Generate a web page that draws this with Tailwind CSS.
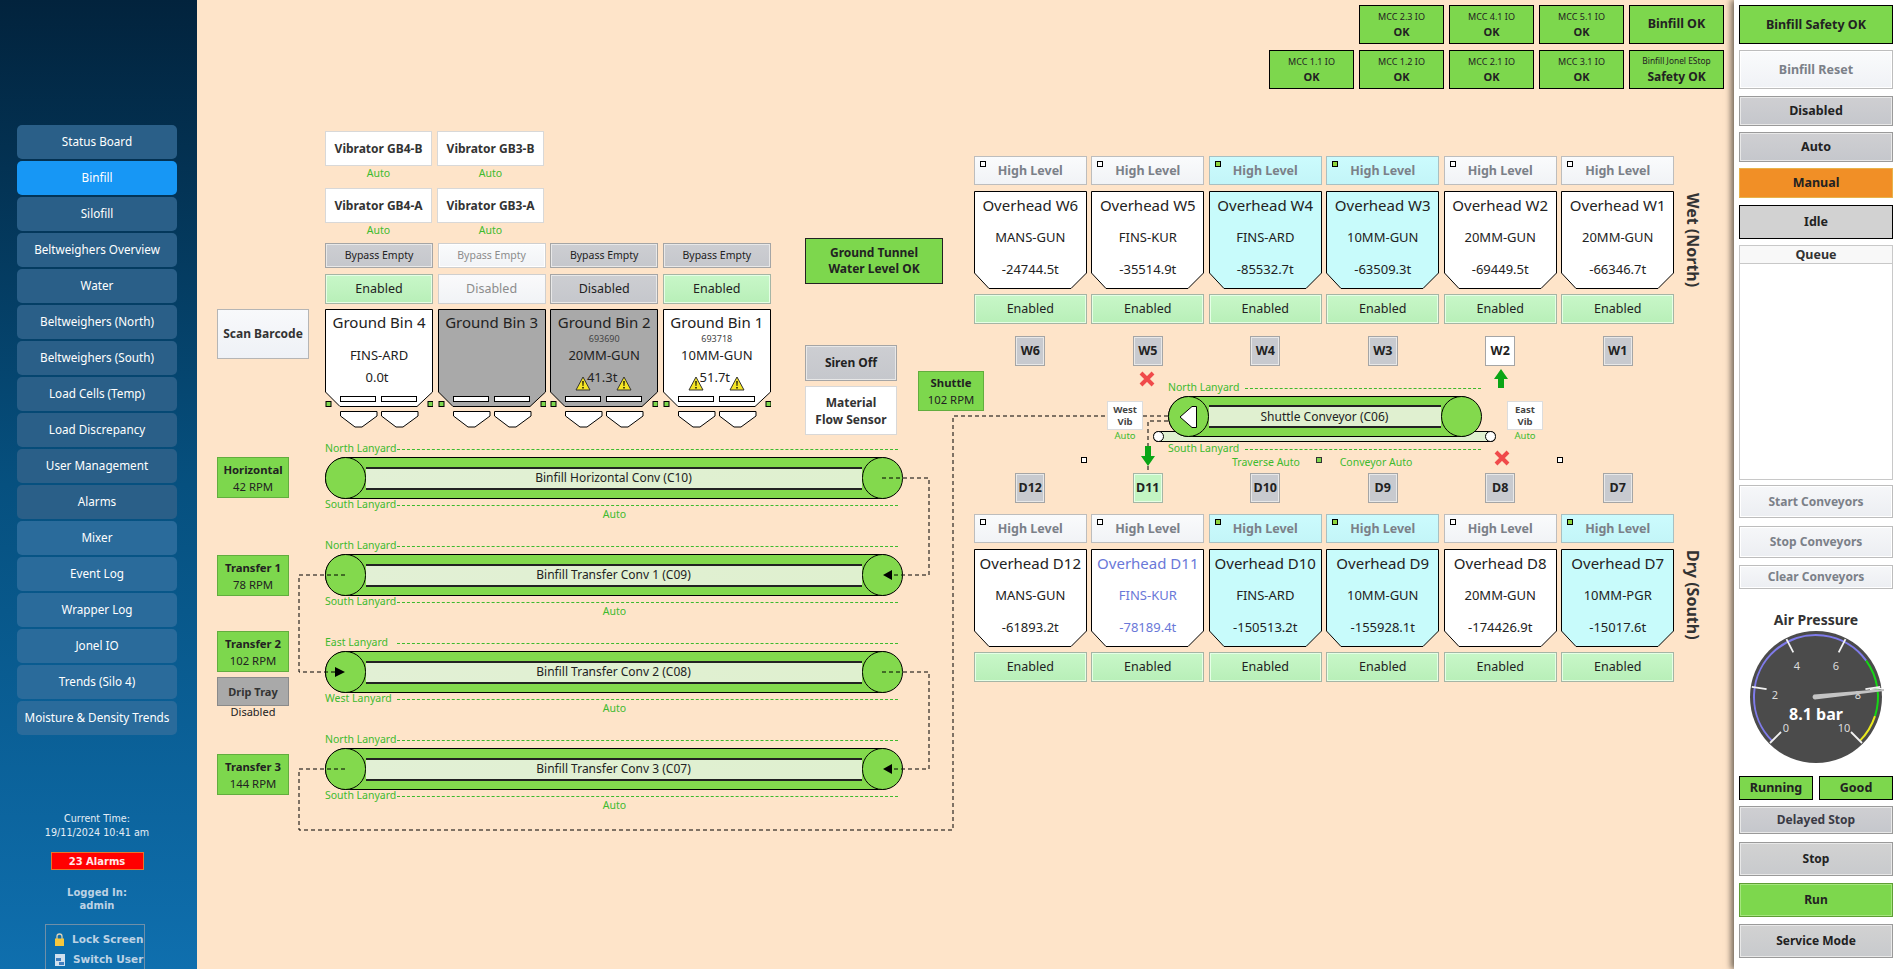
<!DOCTYPE html>
<html lang="en">
<head>
<meta charset="utf-8">
<title>Binfill</title>
<script src="https://cdn.jsdelivr.net/npm/@tailwindcss/browser@4"></script>
</head>
<body class="m-0">
<div class="flex w-[1903px] h-[969px] overflow-hidden font-['Noto_Sans',sans-serif] text-[#222] bg-[#fee4c9]">

<!-- SIDEBAR -->
<aside class="w-[197px] shrink-0 h-full pl-[17px] pr-[20px] pt-[125px] bg-gradient-to-b from-[#02233d] via-[#06507f] to-[#0f6fae] text-white flex flex-col">
  <nav class="flex flex-col gap-[2px] text-[11.7px] whitespace-nowrap">
    <a class="h-[34px] rounded-[5px] bg-[#2a5f88] flex items-center justify-center">Status Board</a>
    <a class="h-[34px] rounded-[5px] bg-[#1797f5] flex items-center justify-center">Binfill</a>
    <a class="h-[34px] rounded-[5px] bg-[#2a5f88] flex items-center justify-center">Silofill</a>
    <a class="h-[34px] rounded-[5px] bg-[#2a5f88] flex items-center justify-center">Beltweighers Overview</a>
    <a class="h-[34px] rounded-[5px] bg-[#2a5f88] flex items-center justify-center">Water</a>
    <a class="h-[34px] rounded-[5px] bg-[#2a5f88] flex items-center justify-center">Beltweighers (North)</a>
    <a class="h-[34px] rounded-[5px] bg-[#2a5f88] flex items-center justify-center">Beltweighers (South)</a>
    <a class="h-[34px] rounded-[5px] bg-[#2a5f88] flex items-center justify-center">Load Cells (Temp)</a>
    <a class="h-[34px] rounded-[5px] bg-[#2a5f88] flex items-center justify-center">Load Discrepancy</a>
    <a class="h-[34px] rounded-[5px] bg-[#2a5f88] flex items-center justify-center">User Management</a>
    <a class="h-[34px] rounded-[5px] bg-[#2a5f88] flex items-center justify-center">Alarms</a>
    <a class="h-[34px] rounded-[5px] bg-[#2a6b9b] flex items-center justify-center">Mixer</a>
    <a class="h-[34px] rounded-[5px] bg-[#2a6b9b] flex items-center justify-center">Event Log</a>
    <a class="h-[34px] rounded-[5px] bg-[#2a6b9b] flex items-center justify-center">Wrapper Log</a>
    <a class="h-[34px] rounded-[5px] bg-[#2a6b9b] flex items-center justify-center">Jonel IO</a>
    <a class="h-[34px] rounded-[5px] bg-[#2a6b9b] flex items-center justify-center">Trends (Silo 4)</a>
    <a class="h-[34px] rounded-[5px] bg-[#2a6b9b] flex items-center justify-center">Moisture &amp; Density Trends</a>
  </nav>
  <div class="mt-[77px] text-center text-[9.6px] leading-[14px] font-['DejaVu_Sans',sans-serif] text-[#e4edf5]">Current Time:<br>19/11/2024 10:41 am</div>
  <div class="mt-[12px] mx-auto w-[93px] h-[22px] bg-[#ff0000] border border-[#e8742c] flex items-center justify-center text-[10px] pt-[1px] font-bold font-['DejaVu_Sans',sans-serif] text-[#ffe8e8]">23 Alarms</div>
  <div class="mt-[16px] text-center text-[10px] leading-[13px] font-bold font-['DejaVu_Sans',sans-serif] text-[#bcd2e4]">Logged In:<br>admin</div>
  <div class="mt-[12px] ml-[28px] w-[100px] h-[60px] shrink-0 border border-[#6f8fa8] pl-[9px] pt-[7px] flex flex-col gap-[5px] text-[10.5px] font-bold font-['DejaVu_Sans',sans-serif] text-[#bcd2e4]">
    <div class="flex items-center gap-[8px] h-[15px]">
      <svg width="9" height="13" viewBox="0 0 9 13"><path d="M2 6V3.5a2.5 2.5 0 0 1 5 0V6" fill="none" stroke="#d8d2b8" stroke-width="1.3"/><rect x="0" y="5.5" width="9" height="7.5" fill="#f6c73c"/></svg>
      <span>Lock Screen</span>
    </div>
    <div class="flex items-center gap-[8px] h-[15px]">
      <svg width="10" height="12" viewBox="0 0 10 12"><rect width="10" height="12" fill="#cfe0ee"/><path d="M1 4h5v3H1zM4 8h5v3H4z" fill="#3f7fc0"/></svg>
      <span>Switch User</span>
    </div>
  </div>
</aside>

<!-- CANVAS -->
<main class="relative w-[1537px] shrink-0 h-full">

  <!-- top status boxes -->
  <div class="absolute left-[1072px] top-[5px] grid grid-cols-[85px_85px_85px_85px_95px] grid-rows-[39px_39px] gap-x-[5px] gap-y-[6px] text-center">
    <div></div>
    <div class="bg-[#7dd74d] border border-black flex flex-col items-center justify-center"><span class="text-[9px] leading-[14px]">MCC 2.3 IO</span><b class="text-[11px] leading-[15px]">OK</b></div>
    <div class="bg-[#7dd74d] border border-black flex flex-col items-center justify-center"><span class="text-[9px] leading-[14px]">MCC 4.1 IO</span><b class="text-[11px] leading-[15px]">OK</b></div>
    <div class="bg-[#7dd74d] border border-black flex flex-col items-center justify-center"><span class="text-[9px] leading-[14px]">MCC 5.1 IO</span><b class="text-[11px] leading-[15px]">OK</b></div>
    <div class="bg-[#7dd74d] border border-black flex items-center justify-center"><b class="text-[12.5px]">Binfill OK</b></div>
    <div class="bg-[#7dd74d] border border-black flex flex-col items-center justify-center"><span class="text-[9px] leading-[14px]">MCC 1.1 IO</span><b class="text-[11px] leading-[15px]">OK</b></div>
    <div class="bg-[#7dd74d] border border-black flex flex-col items-center justify-center"><span class="text-[9px] leading-[14px]">MCC 1.2 IO</span><b class="text-[11px] leading-[15px]">OK</b></div>
    <div class="bg-[#7dd74d] border border-black flex flex-col items-center justify-center"><span class="text-[9px] leading-[14px]">MCC 2.1 IO</span><b class="text-[11px] leading-[15px]">OK</b></div>
    <div class="bg-[#7dd74d] border border-black flex flex-col items-center justify-center"><span class="text-[9px] leading-[14px]">MCC 3.1 IO</span><b class="text-[11px] leading-[15px]">OK</b></div>
    <div class="bg-[#7dd74d] border border-black flex flex-col items-center justify-center"><span class="text-[8.4px] leading-[14px]">Binfill Jonel EStop</span><b class="text-[12px] leading-[17px]">Safety OK</b></div>
  </div>

  <!-- scan barcode -->
  <button class="absolute left-[20px] top-[309px] w-[92px] h-[50px] bg-gradient-to-b from-[#f8f9fb] to-[#eef1f6] border border-[#b5b5b5] text-[12px] font-bold text-[#333]">Scan Barcode</button>

  <!-- conveyor speed boxes -->
  <div class="absolute left-[20px] top-[457px] w-[72px] h-[41px] bg-[#7dd74d] border border-[#62ad3e] flex flex-col items-center justify-center text-[11.3px] leading-[17px]"><b>Horizontal</b><span>42 RPM</span></div>
  <div class="absolute left-[20px] top-[555px] w-[72px] h-[41px] bg-[#7dd74d] border border-[#62ad3e] flex flex-col items-center justify-center text-[11.3px] leading-[17px]"><b>Transfer 1</b><span>78 RPM</span></div>
  <div class="absolute left-[20px] top-[631px] w-[72px] flex flex-col items-center text-[11.3px] leading-[17px]">
    <div class="w-full h-[41px] bg-[#7dd74d] border border-[#62ad3e] flex flex-col items-center justify-center"><b>Transfer 2</b><span>102 RPM</span></div>
    <div class="w-full h-[29px] mt-[5px] bg-[#a9a9a9] border border-[#8a8a8a] flex items-center justify-center font-bold text-[#333] text-[11px]">Drip Tray</div>
    <div class="text-[11px] leading-[14px] mt-[-1px]">Disabled</div>
  </div>
  <div class="absolute left-[20px] top-[754px] w-[72px] h-[41px] bg-[#7dd74d] border border-[#62ad3e] flex flex-col items-center justify-center text-[11.3px] leading-[17px]"><b>Transfer 3</b><span>144 RPM</span></div>

  <!-- vibrators -->
  <div class="absolute left-[128px] top-[131px] grid grid-cols-[107px_107px] gap-x-[5px] text-center">
    <div class="h-[57px]"><div class="h-[35px] bg-white border border-[#d8d8d8] flex items-center justify-center text-[12px] font-bold text-[#333]">Vibrator GB4-B</div><div class="text-[10.5px] leading-[14px] text-[#3dba2e]">Auto</div></div>
    <div class="h-[57px]"><div class="h-[35px] bg-white border border-[#d8d8d8] flex items-center justify-center text-[12px] font-bold text-[#333]">Vibrator GB3-B</div><div class="text-[10.5px] leading-[14px] text-[#3dba2e]">Auto</div></div>
    <div class="h-[57px]"><div class="h-[35px] bg-white border border-[#d8d8d8] flex items-center justify-center text-[12px] font-bold text-[#333]">Vibrator GB4-A</div><div class="text-[10.5px] leading-[14px] text-[#3dba2e]">Auto</div></div>
    <div class="h-[57px]"><div class="h-[35px] bg-white border border-[#d8d8d8] flex items-center justify-center text-[12px] font-bold text-[#333]">Vibrator GB3-A</div><div class="text-[10.5px] leading-[14px] text-[#3dba2e]">Auto</div></div>
  </div>

  <!-- ground bins -->
  <div class="absolute left-[128px] top-[243px] flex gap-[4.6px]">
    <!-- bin 4 -->
    <div class="w-[108px] flex flex-col">
      <button class="h-[25px] bg-gradient-to-b from-[#cdced2] to-[#c5c7cc] border border-[#a5a5a5] shadow-[inset_0_0_0_1px_#e8e8e8] text-[10.5px]">Bypass Empty</button>
      <div class="h-[30px] mt-[6px] bg-gradient-to-b from-[#c8f7c8] to-[#b8efb8] border border-[#a5b5a5] shadow-[inset_0_0_0_1px_#e5ffe5] flex items-center justify-center text-[12.5px]">Enabled</div>
      <div class="relative h-[119px] mt-[5px]">
        <svg class="absolute inset-0" width="108" height="119" viewBox="0 0 108 119"><path d="M.5.5H107.5V83L92 97.5H15L.5 83Z" fill="#fff" stroke="#000"/><rect x="15.5" y="87.5" width="35" height="5" fill="#fff" stroke="#000"/><rect x="56.5" y="87.5" width="35" height="5" fill="#fff" stroke="#000"/><path d="M15.5 102.5H52V107L37 118H30L15.5 107Z" fill="#fff" stroke="#000"/><path d="M56.5 102.5H93V107L78 118H71L56.5 107Z" fill="#fff" stroke="#000"/><rect x="1" y="92.500" width="5" height="5" fill="#7dd74d" stroke="#000"/><rect x="103" y="92.500" width="5" height="5" fill="#7dd74d" stroke="#000"/></svg>
        <div class="relative flex flex-col items-center pt-[4px] text-center">
          <div class="h-[19px] leading-[19px] text-[15px]">Ground Bin 4</div><div class="h-[12px] mt-[1px] leading-[12px] text-[9px] text-[#555]"></div>
          <div class="h-[18px] mt-[1px] leading-[18px] text-[13px]">FINS-ARD</div><div class="h-[18px] mt-[4px] leading-[18px] text-[13px] pr-[4px]">0.0t</div>
        </div>
      </div>
    </div>
    <!-- bin 3 -->
    <div class="w-[108px] flex flex-col">
      <button class="h-[25px] bg-gradient-to-b from-[#fafbfc] to-[#f1f3f6] border border-[#cfcfcf] shadow-[inset_0_0_0_1px_#fff] text-[10.5px] text-[#8c8c8c]">Bypass Empty</button>
      <div class="h-[30px] mt-[6px] bg-gradient-to-b from-[#fafafb] to-[#f1f3f6] border border-[#cfcfcf] flex items-center justify-center text-[12.5px] text-[#8c8c8c]">Disabled</div>
      <div class="relative h-[119px] mt-[5px]">
        <svg class="absolute inset-0" width="108" height="119" viewBox="0 0 108 119"><path d="M.5.5H107.5V83L92 97.5H15L.5 83Z" fill="#a9a9a9" stroke="#000"/><rect x="15.5" y="87.5" width="35" height="5" fill="#fff" stroke="#000"/><rect x="56.5" y="87.5" width="35" height="5" fill="#fff" stroke="#000"/><path d="M15.5 102.5H52V107L37 118H30L15.5 107Z" fill="#fff" stroke="#000"/><path d="M56.5 102.5H93V107L78 118H71L56.5 107Z" fill="#fff" stroke="#000"/><rect x="1" y="92.500" width="5" height="5" fill="#7dd74d" stroke="#000"/><rect x="103" y="92.500" width="5" height="5" fill="#7dd74d" stroke="#000"/></svg>
        <div class="relative flex flex-col items-center pt-[4px] text-center">
          <div class="h-[19px] leading-[19px] text-[15px]">Ground Bin 3</div>
        </div>
      </div>
    </div>
    <!-- bin 2 -->
    <div class="w-[108px] flex flex-col">
      <button class="h-[25px] bg-gradient-to-b from-[#cdced2] to-[#c5c7cc] border border-[#a5a5a5] shadow-[inset_0_0_0_1px_#e8e8e8] text-[10.5px]">Bypass Empty</button>
      <div class="h-[30px] mt-[6px] bg-gradient-to-b from-[#cdced2] to-[#c5c7cc] border border-[#a5a5a5] shadow-[inset_0_0_0_1px_#e8e8e8] flex items-center justify-center text-[12.5px]">Disabled</div>
      <div class="relative h-[119px] mt-[5px]">
        <svg class="absolute inset-0" width="108" height="119" viewBox="0 0 108 119"><path d="M.5.5H107.5V83L92 97.5H15L.5 83Z" fill="#a9a9a9" stroke="#000"/><rect x="15.5" y="87.5" width="35" height="5" fill="#fff" stroke="#000"/><rect x="56.5" y="87.5" width="35" height="5" fill="#fff" stroke="#000"/><path d="M15.5 102.5H52V107L37 118H30L15.5 107Z" fill="#fff" stroke="#000"/><path d="M56.5 102.5H93V107L78 118H71L56.5 107Z" fill="#fff" stroke="#000"/><rect x="1" y="92.500" width="5" height="5" fill="#7dd74d" stroke="#000"/><rect x="103" y="92.500" width="5" height="5" fill="#7dd74d" stroke="#000"/></svg>
        <div class="relative flex flex-col items-center pt-[4px] text-center">
          <div class="h-[19px] leading-[19px] text-[15px]">Ground Bin 2</div><div class="h-[12px] mt-[1px] leading-[12px] text-[9px] text-[#444]">693690</div>
          <div class="h-[18px] mt-[1px] leading-[18px] text-[13px]">20MM-GUN</div><div class="h-[18px] mt-[4px] leading-[18px] text-[13px] pr-[4px]">41.3t</div>
        </div>
        <svg class="absolute left-[25px] top-[67px]" width="16" height="15" viewBox="0 0 16 15"><path d="M8 1L15 14H1Z" fill="#f5e526" stroke="#333" stroke-linejoin="round"/><path d="M7.300 5h1.400l-.3 5h-.8zM7.300 11h1.400v1.500H7.300z" fill="#000"/></svg>
        <svg class="absolute left-[66px] top-[67px]" width="16" height="15" viewBox="0 0 16 15"><path d="M8 1L15 14H1Z" fill="#f5e526" stroke="#333" stroke-linejoin="round"/><path d="M7.300 5h1.400l-.3 5h-.8zM7.300 11h1.400v1.500H7.300z" fill="#000"/></svg>
      </div>
    </div>
    <!-- bin 1 -->
    <div class="w-[108px] flex flex-col">
      <button class="h-[25px] bg-gradient-to-b from-[#cdced2] to-[#c5c7cc] border border-[#a5a5a5] shadow-[inset_0_0_0_1px_#e8e8e8] text-[10.5px]">Bypass Empty</button>
      <div class="h-[30px] mt-[6px] bg-gradient-to-b from-[#c8f7c8] to-[#b8efb8] border border-[#a5b5a5] shadow-[inset_0_0_0_1px_#e5ffe5] flex items-center justify-center text-[12.5px]">Enabled</div>
      <div class="relative h-[119px] mt-[5px]">
        <svg class="absolute inset-0" width="108" height="119" viewBox="0 0 108 119"><path d="M.5.5H107.5V83L92 97.5H15L.5 83Z" fill="#fff" stroke="#000"/><rect x="15.5" y="87.5" width="35" height="5" fill="#fff" stroke="#000"/><rect x="56.5" y="87.5" width="35" height="5" fill="#fff" stroke="#000"/><path d="M15.5 102.5H52V107L37 118H30L15.5 107Z" fill="#fff" stroke="#000"/><path d="M56.5 102.5H93V107L78 118H71L56.5 107Z" fill="#fff" stroke="#000"/><rect x="1" y="92.500" width="5" height="5" fill="#7dd74d" stroke="#000"/><rect x="103" y="92.500" width="5" height="5" fill="#7dd74d" stroke="#000"/></svg>
        <div class="relative flex flex-col items-center pt-[4px] text-center">
          <div class="h-[19px] leading-[19px] text-[15px]">Ground Bin 1</div><div class="h-[12px] mt-[1px] leading-[12px] text-[9px] text-[#444]">693718</div>
          <div class="h-[18px] mt-[1px] leading-[18px] text-[13px]">10MM-GUN</div><div class="h-[18px] mt-[4px] leading-[18px] text-[13px] pr-[4px]">51.7t</div>
        </div>
        <svg class="absolute left-[25px] top-[67px]" width="16" height="15" viewBox="0 0 16 15"><path d="M8 1L15 14H1Z" fill="#f5e526" stroke="#333" stroke-linejoin="round"/><path d="M7.300 5h1.400l-.3 5h-.8zM7.300 11h1.400v1.500H7.300z" fill="#000"/></svg>
        <svg class="absolute left-[66px] top-[67px]" width="16" height="15" viewBox="0 0 16 15"><path d="M8 1L15 14H1Z" fill="#f5e526" stroke="#333" stroke-linejoin="round"/><path d="M7.300 5h1.400l-.3 5h-.8zM7.300 11h1.400v1.500H7.300z" fill="#000"/></svg>
      </div>
    </div>
  </div>

  <!-- tunnel, siren, flow sensor, shuttle -->
  <div class="absolute left-[608px] top-[238px] w-[138px] h-[46px] bg-[#7dd74d] border border-[#222] flex items-center justify-center text-center text-[12px] leading-[16px] font-bold">Ground Tunnel<br>Water Level OK</div>
  <button class="absolute left-[608px] top-[345px] w-[92px] h-[36px] bg-gradient-to-b from-[#cdced2] to-[#c5c7cc] border border-[#a5a5a5] shadow-[inset_0_0_0_1px_#e8e8e8] text-[12px] font-bold">Siren Off</button>
  <div class="absolute left-[608px] top-[386px] w-[92px] h-[49px] bg-white border border-[#d8d8d8] flex items-center justify-center text-center text-[12px] leading-[17px] font-bold text-[#333]">Material<br>Flow Sensor</div>
  <div class="absolute left-[721px] top-[371px] w-[66px] h-[40px] bg-[#7dd74d] border border-[#62ad3e] flex flex-col items-center justify-center text-[11.3px] leading-[17px]"><b>Shuttle</b><span>102 RPM</span></div>

  <!-- main conveyors -->
  <div class="absolute left-[128px] top-[441px] w-[577px] flex flex-col whitespace-nowrap">
    <div class="h-[97px]">
      <div class="h-[16px] flex items-center text-[10.5px] text-[#3dba2e]"><span class="w-[72px]">North Lanyard</span><span class="flex-1 mr-[4px] border-t border-dashed border-[#3dba2e]"></span></div>
      <div class="h-[42px] rounded-full border-[1.5px] border-black bg-[#83d94d] flex items-center">
        <span class="w-[41px] h-[42px] shrink-0 rounded-full border-[1.5px] border-black bg-[#83d94d] ml-[-1.5px]"></span>
        <div class="flex-1 h-[23px] border-y-2 border-[#222] bg-gradient-to-r from-[#e2f0d5] to-[#dff0cf] flex items-center justify-center text-[12px]">Binfill Horizontal Conv (C10)</div>
        <span class="w-[41px] h-[42px] shrink-0 rounded-full border-[1.5px] border-black bg-[#83d94d] mr-[-1.5px]"></span>
      </div>
      <div class="h-[12px] flex items-center text-[10.5px] text-[#3dba2e]"><span class="w-[72px]">South Lanyard</span><span class="flex-1 mr-[4px] border-t border-dashed border-[#3dba2e]"></span></div>
      <div class="mt-[-3px] h-[12px] leading-[12px] text-center text-[10.5px] text-[#3dba2e] pl-[2px]">Auto</div>
    </div>
    <div class="h-[97px]">
      <div class="h-[16px] flex items-center text-[10.5px] text-[#3dba2e]"><span class="w-[72px]">North Lanyard</span><span class="flex-1 mr-[4px] border-t border-dashed border-[#3dba2e]"></span></div>
      <div class="h-[42px] rounded-full border-[1.5px] border-black bg-[#83d94d] flex items-center">
        <span class="w-[41px] h-[42px] shrink-0 rounded-full border-[1.5px] border-black bg-[#83d94d] ml-[-1.5px]"></span>
        <div class="flex-1 h-[23px] border-y-2 border-[#222] bg-gradient-to-r from-[#e2f0d5] to-[#dff0cf] flex items-center justify-center text-[12px]">Binfill Transfer Conv 1 (C09)</div>
        <span class="w-[41px] h-[42px] shrink-0 rounded-full border-[1.5px] border-black bg-[#83d94d] mr-[-1.5px]"></span>
      </div>
      <div class="h-[12px] flex items-center text-[10.5px] text-[#3dba2e]"><span class="w-[72px]">South Lanyard</span><span class="flex-1 mr-[4px] border-t border-dashed border-[#3dba2e]"></span></div>
      <div class="mt-[-3px] h-[12px] leading-[12px] text-center text-[10.5px] text-[#3dba2e] pl-[2px]">Auto</div>
    </div>
    <div class="h-[97px]">
      <div class="h-[16px] flex items-center text-[10.5px] text-[#3dba2e]"><span class="w-[72px]">East Lanyard</span><span class="flex-1 mr-[4px] border-t border-dashed border-[#3dba2e]"></span></div>
      <div class="h-[42px] rounded-full border-[1.5px] border-black bg-[#83d94d] flex items-center">
        <span class="w-[41px] h-[42px] shrink-0 rounded-full border-[1.5px] border-black bg-[#83d94d] ml-[-1.5px]"></span>
        <div class="flex-1 h-[23px] border-y-2 border-[#222] bg-gradient-to-r from-[#e2f0d5] to-[#dff0cf] flex items-center justify-center text-[12px]">Binfill Transfer Conv 2 (C08)</div>
        <span class="w-[41px] h-[42px] shrink-0 rounded-full border-[1.5px] border-black bg-[#83d94d] mr-[-1.5px]"></span>
      </div>
      <div class="h-[12px] flex items-center text-[10.5px] text-[#3dba2e]"><span class="w-[72px]">West Lanyard</span><span class="flex-1 mr-[4px] border-t border-dashed border-[#3dba2e]"></span></div>
      <div class="mt-[-3px] h-[12px] leading-[12px] text-center text-[10.5px] text-[#3dba2e] pl-[2px]">Auto</div>
    </div>
    <div class="h-[97px]">
      <div class="h-[16px] flex items-center text-[10.5px] text-[#3dba2e]"><span class="w-[72px]">North Lanyard</span><span class="flex-1 mr-[4px] border-t border-dashed border-[#3dba2e]"></span></div>
      <div class="h-[42px] rounded-full border-[1.5px] border-black bg-[#83d94d] flex items-center">
        <span class="w-[41px] h-[42px] shrink-0 rounded-full border-[1.5px] border-black bg-[#83d94d] ml-[-1.5px]"></span>
        <div class="flex-1 h-[23px] border-y-2 border-[#222] bg-gradient-to-r from-[#e2f0d5] to-[#dff0cf] flex items-center justify-center text-[12px]">Binfill Transfer Conv 3 (C07)</div>
        <span class="w-[41px] h-[42px] shrink-0 rounded-full border-[1.5px] border-black bg-[#83d94d] mr-[-1.5px]"></span>
      </div>
      <div class="h-[12px] flex items-center text-[10.5px] text-[#3dba2e]"><span class="w-[72px]">South Lanyard</span><span class="flex-1 mr-[4px] border-t border-dashed border-[#3dba2e]"></span></div>
      <div class="mt-[-3px] h-[12px] leading-[12px] text-center text-[10.5px] text-[#3dba2e] pl-[2px]">Auto</div>
    </div>
  </div>

  <!-- Wet overhead row -->
  <div class="absolute left-[777px] top-[156px] flex gap-[4.9px] text-center">
    <div class="w-[112.6px] flex flex-col items-center">
      <div class="relative w-full h-[29px] pt-[1px] bg-gradient-to-b from-[#fafbfc] to-[#f1f3f6] border border-[#bdbdbd] flex items-center justify-center text-[12.5px] font-bold text-[#7b8088]"><i class="absolute left-[5px] top-[4px] w-[6px] h-[6px] bg-white border border-black"></i>High Level</div>
      <div class="relative w-full h-[98px] mt-[6px]"><svg class="absolute inset-0" width="113" height="98" viewBox="0 0 113 98"><path d="M.5.5H112.500V82L97 97.500H15L.5 82Z" fill="#fff" stroke="#000"/></svg><div class="relative flex flex-col items-center pt-[4px]"><div class="h-[20px] leading-[20px] text-[15px]">Overhead W6</div><div class="h-[18px] mt-[13px] leading-[18px] text-[13px]">MANS-GUN</div><div class="h-[18px] mt-[13.5px] leading-[18px] text-[13px]">-24744.5t</div></div></div>
      <div class="w-full h-[30px] mt-[5px] bg-gradient-to-b from-[#c8f7c8] to-[#b8efb8] border border-[#a5b5a5] shadow-[inset_0_0_0_1px_#e5ffe5] flex items-center justify-center text-[12.5px]">Enabled</div>
      <div class="w-[30px] h-[30px] mt-[12px] bg-[#c8cacf] border border-[#a5a5a5] shadow-[inset_0_0_0_1px_#e8e8e8] flex items-center justify-center text-[12.5px] font-bold">W6</div>
    </div>
    <div class="w-[112.6px] flex flex-col items-center">
      <div class="relative w-full h-[29px] pt-[1px] bg-gradient-to-b from-[#fafbfc] to-[#f1f3f6] border border-[#bdbdbd] flex items-center justify-center text-[12.5px] font-bold text-[#7b8088]"><i class="absolute left-[5px] top-[4px] w-[6px] h-[6px] bg-white border border-black"></i>High Level</div>
      <div class="relative w-full h-[98px] mt-[6px]"><svg class="absolute inset-0" width="113" height="98" viewBox="0 0 113 98"><path d="M.5.5H112.500V82L97 97.500H15L.5 82Z" fill="#fff" stroke="#000"/></svg><div class="relative flex flex-col items-center pt-[4px]"><div class="h-[20px] leading-[20px] text-[15px]">Overhead W5</div><div class="h-[18px] mt-[13px] leading-[18px] text-[13px]">FINS-KUR</div><div class="h-[18px] mt-[13.5px] leading-[18px] text-[13px]">-35514.9t</div></div></div>
      <div class="w-full h-[30px] mt-[5px] bg-gradient-to-b from-[#c8f7c8] to-[#b8efb8] border border-[#a5b5a5] shadow-[inset_0_0_0_1px_#e5ffe5] flex items-center justify-center text-[12.5px]">Enabled</div>
      <div class="w-[30px] h-[30px] mt-[12px] bg-[#c8cacf] border border-[#a5a5a5] shadow-[inset_0_0_0_1px_#e8e8e8] flex items-center justify-center text-[12.5px] font-bold">W5</div>
    </div>
    <div class="w-[112.6px] flex flex-col items-center">
      <div class="relative w-full h-[29px] pt-[1px] bg-gradient-to-b from-[#ccfbfd] to-[#c3f5f8] border border-[#a8c0c2] flex items-center justify-center text-[12.5px] font-bold text-[#7b8088]"><i class="absolute left-[5px] top-[4px] w-[6px] h-[6px] bg-[#8fd53c] border border-black"></i>High Level</div>
      <div class="relative w-full h-[98px] mt-[6px]"><svg class="absolute inset-0" width="113" height="98" viewBox="0 0 113 98"><path d="M.5.5H112.500V82L97 97.500H15L.5 82Z" fill="#c8fbfb" stroke="#000"/></svg><div class="relative flex flex-col items-center pt-[4px]"><div class="h-[20px] leading-[20px] text-[15px]">Overhead W4</div><div class="h-[18px] mt-[13px] leading-[18px] text-[13px]">FINS-ARD</div><div class="h-[18px] mt-[13.5px] leading-[18px] text-[13px]">-85532.7t</div></div></div>
      <div class="w-full h-[30px] mt-[5px] bg-gradient-to-b from-[#c8f7c8] to-[#b8efb8] border border-[#a5b5a5] shadow-[inset_0_0_0_1px_#e5ffe5] flex items-center justify-center text-[12.5px]">Enabled</div>
      <div class="w-[30px] h-[30px] mt-[12px] bg-[#c8cacf] border border-[#a5a5a5] shadow-[inset_0_0_0_1px_#e8e8e8] flex items-center justify-center text-[12.5px] font-bold">W4</div>
    </div>
    <div class="w-[112.6px] flex flex-col items-center">
      <div class="relative w-full h-[29px] pt-[1px] bg-gradient-to-b from-[#ccfbfd] to-[#c3f5f8] border border-[#a8c0c2] flex items-center justify-center text-[12.5px] font-bold text-[#7b8088]"><i class="absolute left-[5px] top-[4px] w-[6px] h-[6px] bg-[#8fd53c] border border-black"></i>High Level</div>
      <div class="relative w-full h-[98px] mt-[6px]"><svg class="absolute inset-0" width="113" height="98" viewBox="0 0 113 98"><path d="M.5.5H112.500V82L97 97.500H15L.5 82Z" fill="#c8fbfb" stroke="#000"/></svg><div class="relative flex flex-col items-center pt-[4px]"><div class="h-[20px] leading-[20px] text-[15px]">Overhead W3</div><div class="h-[18px] mt-[13px] leading-[18px] text-[13px]">10MM-GUN</div><div class="h-[18px] mt-[13.5px] leading-[18px] text-[13px]">-63509.3t</div></div></div>
      <div class="w-full h-[30px] mt-[5px] bg-gradient-to-b from-[#c8f7c8] to-[#b8efb8] border border-[#a5b5a5] shadow-[inset_0_0_0_1px_#e5ffe5] flex items-center justify-center text-[12.5px]">Enabled</div>
      <div class="w-[30px] h-[30px] mt-[12px] bg-[#c8cacf] border border-[#a5a5a5] shadow-[inset_0_0_0_1px_#e8e8e8] flex items-center justify-center text-[12.5px] font-bold">W3</div>
    </div>
    <div class="w-[112.6px] flex flex-col items-center">
      <div class="relative w-full h-[29px] pt-[1px] bg-gradient-to-b from-[#fafbfc] to-[#f1f3f6] border border-[#bdbdbd] flex items-center justify-center text-[12.5px] font-bold text-[#7b8088]"><i class="absolute left-[5px] top-[4px] w-[6px] h-[6px] bg-white border border-black"></i>High Level</div>
      <div class="relative w-full h-[98px] mt-[6px]"><svg class="absolute inset-0" width="113" height="98" viewBox="0 0 113 98"><path d="M.5.5H112.500V82L97 97.500H15L.5 82Z" fill="#fff" stroke="#000"/></svg><div class="relative flex flex-col items-center pt-[4px]"><div class="h-[20px] leading-[20px] text-[15px]">Overhead W2</div><div class="h-[18px] mt-[13px] leading-[18px] text-[13px]">20MM-GUN</div><div class="h-[18px] mt-[13.5px] leading-[18px] text-[13px]">-69449.5t</div></div></div>
      <div class="w-full h-[30px] mt-[5px] bg-gradient-to-b from-[#c8f7c8] to-[#b8efb8] border border-[#a5b5a5] shadow-[inset_0_0_0_1px_#e5ffe5] flex items-center justify-center text-[12.5px]">Enabled</div>
      <div class="w-[30px] h-[30px] mt-[12px] bg-white border border-[#a5a5a5] flex items-center justify-center text-[12.5px] font-bold">W2</div>
    </div>
    <div class="w-[112.6px] flex flex-col items-center">
      <div class="relative w-full h-[29px] pt-[1px] bg-gradient-to-b from-[#fafbfc] to-[#f1f3f6] border border-[#bdbdbd] flex items-center justify-center text-[12.5px] font-bold text-[#7b8088]"><i class="absolute left-[5px] top-[4px] w-[6px] h-[6px] bg-white border border-black"></i>High Level</div>
      <div class="relative w-full h-[98px] mt-[6px]"><svg class="absolute inset-0" width="113" height="98" viewBox="0 0 113 98"><path d="M.5.5H112.500V82L97 97.500H15L.5 82Z" fill="#fff" stroke="#000"/></svg><div class="relative flex flex-col items-center pt-[4px]"><div class="h-[20px] leading-[20px] text-[15px]">Overhead W1</div><div class="h-[18px] mt-[13px] leading-[18px] text-[13px]">20MM-GUN</div><div class="h-[18px] mt-[13.5px] leading-[18px] text-[13px]">-66346.7t</div></div></div>
      <div class="w-full h-[30px] mt-[5px] bg-gradient-to-b from-[#c8f7c8] to-[#b8efb8] border border-[#a5b5a5] shadow-[inset_0_0_0_1px_#e5ffe5] flex items-center justify-center text-[12.5px]">Enabled</div>
      <div class="w-[30px] h-[30px] mt-[12px] bg-[#c8cacf] border border-[#a5a5a5] shadow-[inset_0_0_0_1px_#e8e8e8] flex items-center justify-center text-[12.5px] font-bold">W1</div>
    </div>
  </div>

  <!-- Dry overhead row -->
  <div class="absolute left-[777px] top-[473px] flex gap-[4.9px] text-center">
    <div class="w-[112.6px] flex flex-col items-center">
      <div class="w-[30px] h-[30px] bg-[#c8cacf] border border-[#a5a5a5] shadow-[inset_0_0_0_1px_#e8e8e8] flex items-center justify-center text-[12.5px] font-bold">D12</div>
      <div class="relative w-full h-[29px] pt-[1px] mt-[11px] bg-gradient-to-b from-[#fafbfc] to-[#f1f3f6] border border-[#bdbdbd] flex items-center justify-center text-[12.5px] font-bold text-[#7b8088]"><i class="absolute left-[5px] top-[4px] w-[6px] h-[6px] bg-white border border-black"></i>High Level</div>
      <div class="relative w-full h-[98px] mt-[6px]"><svg class="absolute inset-0" width="113" height="98" viewBox="0 0 113 98"><path d="M.5.5H112.500V82L97 97.500H15L.5 82Z" fill="#fff" stroke="#000"/></svg><div class="relative flex flex-col items-center pt-[4px]"><div class="h-[20px] leading-[20px] text-[15px]">Overhead D12</div><div class="h-[18px] mt-[13px] leading-[18px] text-[13px]">MANS-GUN</div><div class="h-[18px] mt-[13.5px] leading-[18px] text-[13px]">-61893.2t</div></div></div>
      <div class="w-full h-[30px] mt-[5px] bg-gradient-to-b from-[#c8f7c8] to-[#b8efb8] border border-[#a5b5a5] shadow-[inset_0_0_0_1px_#e5ffe5] flex items-center justify-center text-[12.5px]">Enabled</div>
    </div>
    <div class="w-[112.6px] flex flex-col items-center">
      <div class="w-[30px] h-[30px] bg-[#c3f5c3] border border-[#a5b5a5] shadow-[inset_0_0_0_1px_#e5ffe5] flex items-center justify-center text-[12.5px] font-bold">D11</div>
      <div class="relative w-full h-[29px] pt-[1px] mt-[11px] bg-gradient-to-b from-[#fafbfc] to-[#f1f3f6] border border-[#bdbdbd] flex items-center justify-center text-[12.5px] font-bold text-[#7b8088]"><i class="absolute left-[5px] top-[4px] w-[6px] h-[6px] bg-white border border-black"></i>High Level</div>
      <div class="relative w-full h-[98px] mt-[6px] text-[#6a78d8]"><svg class="absolute inset-0" width="113" height="98" viewBox="0 0 113 98"><path d="M.5.5H112.500V82L97 97.500H15L.5 82Z" fill="#fff" stroke="#000"/></svg><div class="relative flex flex-col items-center pt-[4px]"><div class="h-[20px] leading-[20px] text-[15px]">Overhead D11</div><div class="h-[18px] mt-[13px] leading-[18px] text-[13px]">FINS-KUR</div><div class="h-[18px] mt-[13.5px] leading-[18px] text-[13px]">-78189.4t</div></div></div>
      <div class="w-full h-[30px] mt-[5px] bg-gradient-to-b from-[#c8f7c8] to-[#b8efb8] border border-[#a5b5a5] shadow-[inset_0_0_0_1px_#e5ffe5] flex items-center justify-center text-[12.5px]">Enabled</div>
    </div>
    <div class="w-[112.6px] flex flex-col items-center">
      <div class="w-[30px] h-[30px] bg-[#c8cacf] border border-[#a5a5a5] shadow-[inset_0_0_0_1px_#e8e8e8] flex items-center justify-center text-[12.5px] font-bold">D10</div>
      <div class="relative w-full h-[29px] pt-[1px] mt-[11px] bg-gradient-to-b from-[#ccfbfd] to-[#c3f5f8] border border-[#a8c0c2] flex items-center justify-center text-[12.5px] font-bold text-[#7b8088]"><i class="absolute left-[5px] top-[4px] w-[6px] h-[6px] bg-[#8fd53c] border border-black"></i>High Level</div>
      <div class="relative w-full h-[98px] mt-[6px]"><svg class="absolute inset-0" width="113" height="98" viewBox="0 0 113 98"><path d="M.5.5H112.500V82L97 97.500H15L.5 82Z" fill="#c8fbfb" stroke="#000"/></svg><div class="relative flex flex-col items-center pt-[4px]"><div class="h-[20px] leading-[20px] text-[15px]">Overhead D10</div><div class="h-[18px] mt-[13px] leading-[18px] text-[13px]">FINS-ARD</div><div class="h-[18px] mt-[13.5px] leading-[18px] text-[13px]">-150513.2t</div></div></div>
      <div class="w-full h-[30px] mt-[5px] bg-gradient-to-b from-[#c8f7c8] to-[#b8efb8] border border-[#a5b5a5] shadow-[inset_0_0_0_1px_#e5ffe5] flex items-center justify-center text-[12.5px]">Enabled</div>
    </div>
    <div class="w-[112.6px] flex flex-col items-center">
      <div class="w-[30px] h-[30px] bg-[#c8cacf] border border-[#a5a5a5] shadow-[inset_0_0_0_1px_#e8e8e8] flex items-center justify-center text-[12.5px] font-bold">D9</div>
      <div class="relative w-full h-[29px] pt-[1px] mt-[11px] bg-gradient-to-b from-[#ccfbfd] to-[#c3f5f8] border border-[#a8c0c2] flex items-center justify-center text-[12.5px] font-bold text-[#7b8088]"><i class="absolute left-[5px] top-[4px] w-[6px] h-[6px] bg-[#8fd53c] border border-black"></i>High Level</div>
      <div class="relative w-full h-[98px] mt-[6px]"><svg class="absolute inset-0" width="113" height="98" viewBox="0 0 113 98"><path d="M.5.5H112.500V82L97 97.500H15L.5 82Z" fill="#c8fbfb" stroke="#000"/></svg><div class="relative flex flex-col items-center pt-[4px]"><div class="h-[20px] leading-[20px] text-[15px]">Overhead D9</div><div class="h-[18px] mt-[13px] leading-[18px] text-[13px]">10MM-GUN</div><div class="h-[18px] mt-[13.5px] leading-[18px] text-[13px]">-155928.1t</div></div></div>
      <div class="w-full h-[30px] mt-[5px] bg-gradient-to-b from-[#c8f7c8] to-[#b8efb8] border border-[#a5b5a5] shadow-[inset_0_0_0_1px_#e5ffe5] flex items-center justify-center text-[12.5px]">Enabled</div>
    </div>
    <div class="w-[112.6px] flex flex-col items-center">
      <div class="w-[30px] h-[30px] bg-[#c8cacf] border border-[#a5a5a5] shadow-[inset_0_0_0_1px_#e8e8e8] flex items-center justify-center text-[12.5px] font-bold">D8</div>
      <div class="relative w-full h-[29px] pt-[1px] mt-[11px] bg-gradient-to-b from-[#fafbfc] to-[#f1f3f6] border border-[#bdbdbd] flex items-center justify-center text-[12.5px] font-bold text-[#7b8088]"><i class="absolute left-[5px] top-[4px] w-[6px] h-[6px] bg-white border border-black"></i>High Level</div>
      <div class="relative w-full h-[98px] mt-[6px]"><svg class="absolute inset-0" width="113" height="98" viewBox="0 0 113 98"><path d="M.5.5H112.500V82L97 97.500H15L.5 82Z" fill="#fff" stroke="#000"/></svg><div class="relative flex flex-col items-center pt-[4px]"><div class="h-[20px] leading-[20px] text-[15px]">Overhead D8</div><div class="h-[18px] mt-[13px] leading-[18px] text-[13px]">20MM-GUN</div><div class="h-[18px] mt-[13.5px] leading-[18px] text-[13px]">-174426.9t</div></div></div>
      <div class="w-full h-[30px] mt-[5px] bg-gradient-to-b from-[#c8f7c8] to-[#b8efb8] border border-[#a5b5a5] shadow-[inset_0_0_0_1px_#e5ffe5] flex items-center justify-center text-[12.5px]">Enabled</div>
    </div>
    <div class="w-[112.6px] flex flex-col items-center">
      <div class="w-[30px] h-[30px] bg-[#c8cacf] border border-[#a5a5a5] shadow-[inset_0_0_0_1px_#e8e8e8] flex items-center justify-center text-[12.5px] font-bold">D7</div>
      <div class="relative w-full h-[29px] pt-[1px] mt-[11px] bg-gradient-to-b from-[#ccfbfd] to-[#c3f5f8] border border-[#a8c0c2] flex items-center justify-center text-[12.5px] font-bold text-[#7b8088]"><i class="absolute left-[5px] top-[4px] w-[6px] h-[6px] bg-[#8fd53c] border border-black"></i>High Level</div>
      <div class="relative w-full h-[98px] mt-[6px]"><svg class="absolute inset-0" width="113" height="98" viewBox="0 0 113 98"><path d="M.5.5H112.500V82L97 97.500H15L.5 82Z" fill="#c8fbfb" stroke="#000"/></svg><div class="relative flex flex-col items-center pt-[4px]"><div class="h-[20px] leading-[20px] text-[15px]">Overhead D7</div><div class="h-[18px] mt-[13px] leading-[18px] text-[13px]">10MM-PGR</div><div class="h-[18px] mt-[13.5px] leading-[18px] text-[13px]">-15017.6t</div></div></div>
      <div class="w-full h-[30px] mt-[5px] bg-gradient-to-b from-[#c8f7c8] to-[#b8efb8] border border-[#a5b5a5] shadow-[inset_0_0_0_1px_#e5ffe5] flex items-center justify-center text-[12.5px]">Enabled</div>
    </div>
  </div>

  <!-- rotated labels -->
  <div class="absolute left-[1484px] top-[180px] h-[120px] flex items-center justify-center [writing-mode:vertical-rl] text-[16px] font-bold text-[#333]">Wet (North)</div>
  <div class="absolute left-[1484px] top-[535px] h-[120px] flex items-center justify-center [writing-mode:vertical-rl] text-[16px] font-bold text-[#333]">Dry (South)</div>

  <!-- vib boxes -->
  <div class="absolute left-[910px] top-[401px] w-[36px] flex flex-col items-center text-center">
    <div class="w-full h-[29px] bg-white border border-[#dcdcdc] text-[9.5px] leading-[12px] font-bold text-[#444] flex items-center justify-center">West<br>Vib</div>
    <div class="text-[9.5px] leading-[12px] text-[#3dba2e]">Auto</div>
  </div>
  <div class="absolute left-[1310px] top-[401px] w-[36px] flex flex-col items-center text-center">
    <div class="w-full h-[29px] bg-white border border-[#dcdcdc] text-[9.5px] leading-[12px] font-bold text-[#444] flex items-center justify-center">East<br>Vib</div>
    <div class="text-[9.5px] leading-[12px] text-[#3dba2e]">Auto</div>
  </div>

  <!-- shuttle conveyor -->
  <div class="absolute left-[971px] top-[380px] w-[313px] flex flex-col whitespace-nowrap">
    <div class="h-[16px] flex items-center text-[10.5px] text-[#3dba2e]"><span class="w-[77px]">North Lanyard</span><span class="flex-1 border-t border-dashed border-[#3dba2e]"></span></div>
    <div class="relative h-[46px]">
      <div class="absolute left-[-15px] right-[-15px] bottom-0 h-[11px] bg-[#e0f0d0] border-y-[1.5px] border-black rounded-full flex items-center justify-between">
        <span class="w-[11px] h-[11px] rounded-full bg-white border border-black"></span>
        <span class="w-[11px] h-[11px] rounded-full bg-white border border-black"></span>
      </div>
      <div class="relative h-[41px] rounded-full border-[1.5px] border-black bg-[#83d94d] flex items-center">
        <span class="w-[41px] h-[41px] shrink-0 rounded-full border-[1.5px] border-black bg-[#83d94d] ml-[-1.5px] flex items-center justify-center"><svg width="18" height="22" viewBox="0 0 18 22"><path d="M1 11L13 .5H17.500V21.500H13Z" fill="#fff" stroke="#000" stroke-width="1"/></svg></span>
        <div class="flex-1 h-[23px] border-y-2 border-[#222] bg-[#e0f0d0] flex items-center justify-center text-[12px]">Shuttle Conveyor (C06)</div>
        <span class="w-[41px] h-[41px] shrink-0 rounded-full border-[1.5px] border-black bg-[#83d94d] mr-[-1.5px]"></span>
      </div>
    </div>
    <div class="h-[14px] flex items-center text-[10.5px] text-[#3dba2e]"><span class="w-[77px]">South Lanyard</span><span class="flex-1 border-t border-dashed border-[#3dba2e]"></span></div>
  </div>
  <div class="absolute left-[1069px] top-[455px] -translate-x-1/2 whitespace-nowrap text-[10.5px] leading-[14px] text-[#3dba2e]">Traverse Auto</div>
  <div class="absolute left-[1179px] top-[455px] -translate-x-1/2 whitespace-nowrap text-[10.5px] leading-[14px] text-[#3dba2e]">Conveyor Auto</div>

  <!-- connecting lines, arrows and markers drawn over the canvas -->
  <svg class="absolute inset-0 pointer-events-none" width="1537" height="969" viewBox="197 0 1537 969">
    <g fill="none" stroke="#000" stroke-width="1" stroke-dasharray="4 3">
      <path d="M882 478H929V575H892"/>
      <path d="M345 575H299V672H335"/>
      <path d="M882 672H929V769H892"/>
      <path d="M345 769H299V830H953V416H1107"/>
      <path d="M1143 416H1168"/>
      <path d="M1168 421H1148V446"/>
      <path d="M1148 466V471"/>
    </g>
    <path d="M883 575L892 570V580Z"/>
    <path d="M883 769L892 764V774Z"/>
    <path d="M335 667L345 672L335 677Z"/>
    <path d="M1501 369L1508 379H1504V388H1498V379H1494Z" fill="#0aa516"/>
    <path d="M1145 446H1151V456H1155L1148 466L1141 456H1145Z" fill="#0aa516"/>
    <path d="M1141 373L1153 385M1153 373L1141 385" stroke="#f04a4a" stroke-width="4"/>
    <path d="M1496 452L1508 464M1508 452L1496 464" stroke="#f04a4a" stroke-width="4"/>
    <rect x="1081.500" y="457.500" width="5" height="5" fill="#fff" stroke="#000"/>
    <rect x="1557.500" y="457.500" width="5" height="5" fill="#fff" stroke="#000"/>
    <rect x="1316.500" y="457.500" width="5" height="5" fill="#7dd74d" stroke="#333"/>
  </svg>
</main>

<!-- RIGHT PANEL -->
<aside class="relative w-[169px] shrink-0 h-full bg-white pl-[5px] pr-[10px] pt-[5px] flex flex-col shadow-[-3px_0_6px_rgba(0,0,0,0.55)] text-center font-bold text-[12.5px]">
  <div class="h-[39px] pt-[2px] bg-[#7dd74d] border border-black flex items-center justify-center">Binfill Safety OK</div>
  <button class="h-[39px] pt-[2px] mt-[6px] bg-gradient-to-b from-[#fafbfc] to-[#f0f2f6] border border-[#bdbdbd] shadow-[inset_0_0_0_1px_#fff] font-bold text-[#7b8088]">Binfill Reset</button>
  <button class="h-[30px] mt-[7px] bg-gradient-to-b from-[#cfcfd2] to-[#c5c7cc] border border-[#9a9a9a] shadow-[inset_0_0_0_1px_#e8e8e8] font-bold">Disabled</button>
  <button class="h-[30px] mt-[6px] bg-gradient-to-b from-[#cfcfd2] to-[#c5c7cc] border border-[#9a9a9a] shadow-[inset_0_0_0_1px_#e8e8e8] font-bold">Auto</button>
  <button class="h-[30px] pt-[1px] mt-[6px] bg-[#f18f26] border border-[#e7b24a] font-bold">Manual</button>
  <div class="h-[34px] mt-[7px] bg-[#d2d2d2] border border-black flex items-center justify-center">Idle</div>
  <div class="h-[235px] mt-[6px] border border-[#c8c8c8] flex flex-col">
    <div class="h-[18px] pt-[1px] border-b border-[#c8c8c8] flex items-center justify-center text-[#333] bg-[#f8f8f8]">Queue</div>
  </div>
  <button class="h-[33px] mt-[5px] bg-gradient-to-b from-[#f6f7f9] to-[#eceef2] border border-[#bdbdbd] shadow-[inset_0_0_0_1px_#fff] font-bold text-[12px] text-[#7b8088]">Start Conveyors</button>
  <button class="h-[32px] mt-[8px] bg-gradient-to-b from-[#f6f7f9] to-[#eceef2] border border-[#bdbdbd] shadow-[inset_0_0_0_1px_#fff] font-bold text-[12px] text-[#7b8088]">Stop Conveyors</button>
  <button class="h-[24px] mt-[7px] bg-gradient-to-b from-[#f6f7f9] to-[#eceef2] border border-[#bdbdbd] shadow-[inset_0_0_0_1px_#fff] font-bold text-[12px] text-[#7b8088]">Clear Conveyors</button>
  <div class="h-[16px] leading-[16px] mt-[23px] text-[14px] text-[#333]">Air Pressure</div>
  <svg class="mt-[3px] mx-auto shrink-0 overflow-visible" width="132" height="132" viewBox="0 0 132 132">
    <circle cx="66" cy="66" r="66" fill="#4b4b4b"/>
    <path d="M22.160 109.840A62 62 0 1 1 116.160 29.560" fill="none" stroke="#7f7bea" stroke-width="2"/>
    <path d="M116.160 29.560A62 62 0 0 1 124.960 85.160" fill="none" stroke="#16d616" stroke-width="2"/>
    <path d="M124.960 85.160A62 62 0 0 1 109.840 109.840" fill="none" stroke="#eaea1e" stroke-width="2"/>
    <path d="M31 101L20 112M16.600 58.200L1.800 55.800M43.300 21.400L36.500 8.100M88.700 21.400L95.500 8.100M115.400 58.200L130.200 55.800M101 101L112 112" stroke="#f2f2f2" stroke-width="1.800" fill="none"/>
    <g fill="#dcdcdc" font-size="11" font-weight="400" text-anchor="middle">
      <text x="36" y="101">0</text><text x="25" y="68">2</text><text x="47" y="39">4</text><text x="86" y="39">6</text><text x="108" y="68">8</text><text x="94" y="101">10</text>
    </g>
    <path d="M64 63.500C62 64.500 62 68 65 68.500L134 60V58Z" fill="#c4c4c4"/>
    <path d="M120 58.500L135 57" stroke="#fff" stroke-width="1"/>
    <text x="66" y="88.500" fill="#fff" font-size="16" font-weight="700" text-anchor="middle">8.1 bar</text>
  </svg>
  <div class="mt-[13px] flex gap-[6px] h-[24px]">
    <div class="flex-1 bg-[#7dd74d] border border-black flex items-center justify-center">Running</div>
    <div class="flex-1 bg-[#7dd74d] border border-black flex items-center justify-center">Good</div>
  </div>
  <button class="h-[28px] mt-[6px] bg-gradient-to-b from-[#cfcfd2] to-[#c5c7cc] border border-[#9a9a9a] shadow-[inset_0_0_0_1px_#e8e8e8] font-bold text-[12px] text-[#3a3a45]">Delayed Stop</button>
  <button class="h-[34px] mt-[8px] bg-gradient-to-b from-[#d2d2d2] to-[#c8cacd] border border-[#9a9a9a] shadow-[inset_0_0_0_1px_#e8e8e8] font-bold text-[12px]">Stop</button>
  <button class="h-[34px] mt-[7px] bg-[#7dd74d] border border-[#5f9e35] shadow-[inset_0_0_0_1px_#a5e57e] font-bold text-[12px]">Run</button>
  <button class="h-[34px] mt-[7px] bg-gradient-to-b from-[#d2d2d2] to-[#c8cacd] border border-[#9a9a9a] shadow-[inset_0_0_0_1px_#e8e8e8] font-bold text-[12px]">Service Mode</button>
</aside>
</div>
</body>
</html>
